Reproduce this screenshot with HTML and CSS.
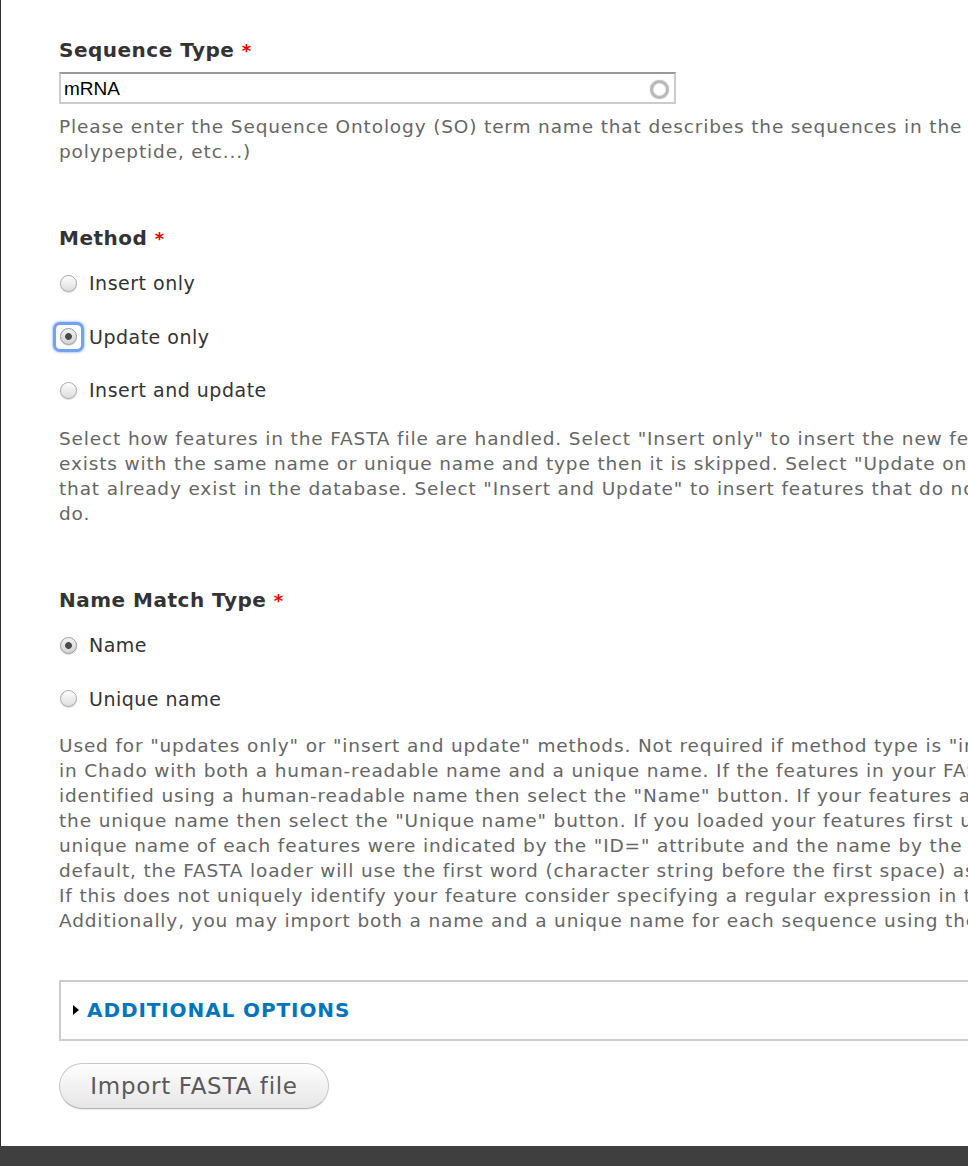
FILE: index.html
```html
<!DOCTYPE html>
<html lang="en">
<head>
    <meta charset="UTF-8">
    <meta name="viewport" content="width=device-width, initial-scale=1.0">
    <title>Import FASTA file</title>
    <link rel="stylesheet" href="styles.css">
</head>
<body>
    <div class="page">
        <form class="import-form">
            <!-- Sequence type (autocomplete) -->
            <div class="form-item form-item-type">
                <label class="form-label" for="seq-type">Sequence Type <span class="required">*</span></label>
                <div class="autocomplete">
                    <input type="text" id="seq-type" class="form-text" value="mRNA">
                    <span class="throbber"></span>
                </div>
                <div class="description">
                    Please enter the Sequence Ontology (SO) term name that describes the sequences in the FASTA file (e.g. gene, mRNA,<br>
                    polypeptide, etc...)
                </div>
            </div>

            <!-- Method -->
            <div class="form-item form-item-method">
                <label class="form-label">Method <span class="required">*</span></label>
                <div class="form-radios">
                    <div class="form-radio-item">
                        <input type="radio" name="method" id="method-insert" class="form-radio">
                        <label for="method-insert">Insert only</label>
                    </div>
                    <div class="form-radio-item">
                        <span class="focus-ring"><input type="radio" name="method" id="method-update" class="form-radio" checked></span>
                        <label for="method-update">Update only</label>
                    </div>
                    <div class="form-radio-item">
                        <input type="radio" name="method" id="method-both" class="form-radio">
                        <label for="method-both">Insert and update</label>
                    </div>
                </div>
                <div class="description">
                    Select how features in the FASTA file are handled. Select "Insert only" to insert the new features. If a feature already<br>
                    exists with the same name or unique name and type then it is skipped. Select "Update only" to only update featues<br>
                    that already exist in the database. Select "Insert and Update" to insert features that do not exist and upate those that already<br>
                    do.
                </div>
            </div>

            <!-- Name match type -->
            <div class="form-item form-item-match">
                <label class="form-label">Name Match Type <span class="required">*</span></label>
                <div class="form-radios">
                    <div class="form-radio-item">
                        <input type="radio" name="match" id="match-name" class="form-radio" checked>
                        <label for="match-name">Name</label>
                    </div>
                    <div class="form-radio-item">
                        <input type="radio" name="match" id="match-uname" class="form-radio">
                        <label for="match-uname">Unique name</label>
                    </div>
                </div>
                <div class="description">
                    Used for "updates only" or "insert and update" methods. Not required if method type is "insert". Feature data is stored<br>
                    in Chado with both a human-readable name and a unique name. If the features in your FASTA file are<br>
                    identified using a human-readable name then select the "Name" button. If your features are identified using<br>
                    the unique name then select the "Unique name" button. If you loaded your features first using the GFF loader then the<br>
                    unique name of each features were indicated by the "ID=" attribute and the name by the "Name=" attribute. By<br>
                    default, the FASTA loader will use the first word (character string before the first space) as the name for your feature.<br>
                    If this does not uniquely identify your feature consider specifying a regular expression in the advanced section below.<br>
                    Additionally, you may import both a name and a unique name for each sequence using the advanced options.
                </div>
            </div>

            <fieldset class="collapsible collapsed">
                <legend><span class="arrow"></span><a href="#" class="fieldset-title">Additional Options</a></legend>
            </fieldset>

            <button type="button" class="form-submit">Import FASTA file</button>
        </form>
    </div>
    <div class="bottom-bar"></div>
</body>
</html>
```

FILE: styles.css
```css
html, body {
    margin: 0;
    padding: 0;
}

body {
    width: 968px;
    height: 1166px;
    overflow: hidden;
    background-color: #fff;
    font-family: "DejaVu Sans", sans-serif;
    color: #333;
}

.page {
    height: 1146px;
    border-left: 1px solid #2f2f2f;
    overflow: hidden;
    box-sizing: border-box;
}

.import-form {
    width: 1500px;
    padding: 38px 0 0 58px;
}

.form-label {
    display: block;
    font-size: 20px;
    line-height: 24px;
    font-weight: bold;
    letter-spacing: 0.5px;
    color: #333;
}

.required {
    color: #e00;
    font-size: 18px;
}

.description {
    font-size: 18.5px;
    line-height: 25px;
    letter-spacing: 0.85px;
    color: #666;
    white-space: nowrap;
}

/* sequence type */
.form-item-type .form-label {
    margin-bottom: 9px;
}

.autocomplete {
    position: relative;
    width: 617px;
}

.form-text {
    display: block;
    box-sizing: border-box;
    width: 617px;
    height: 32px;
    margin: 0;
    padding: 2px 3px 0;
    border: 2px solid #ccc;
    border-top-color: #999;
    font-family: "Liberation Sans", Arial, sans-serif;
    font-size: 19px;
    color: #000;
    outline: none;
}

.throbber {
    position: absolute;
    right: 7px;
    top: 8px;
    width: 13px;
    height: 13px;
    border: 3px solid #b9b9b9;
    border-radius: 50%;
    box-shadow: 0 0 1px #999, inset 0 0 1px #999;
}

.form-item-type .description {
    margin-top: 10px;
}

/* radios */
.form-item-method {
    margin-top: 62px;
}

.form-item-match {
    margin-top: 62px;
}

.form-radios {
    display: flex;
    flex-direction: column;
    gap: 27.5px;
    margin: 19px 0 23px;
}

.form-item-match .form-radios {
    margin: 19px 0 21px;
}

.form-radio-item {
    display: flex;
    align-items: center;
    height: 26px;
}

.form-radio-item label {
    font-size: 19px;
    letter-spacing: 0.5px;
    color: #333;
    margin-left: 12px;
}

.form-radio {
    appearance: none;
    -webkit-appearance: none;
    width: 17px;
    height: 17px;
    margin: 0 0 0 1px;
    border: 1px solid #a8a8a8;
    border-radius: 50%;
    background: linear-gradient(#fdfdfd, #dedede);
    box-shadow: 0 1px 1px rgba(0,0,0,0.15);
    box-sizing: border-box;
}

.form-radio:checked {
    background: radial-gradient(circle, #4a4a4a 0, #4a4a4a 3px, transparent 3.8px), linear-gradient(#f2f2f2, #d4d4d4);
    border-color: #9a9a9a;
}

.focus-ring {
    display: inline-flex;
    align-items: center;
    justify-content: center;
    width: 25px;
    height: 24px;
    margin-left: -3px;
    margin-right: -4px;
    border-radius: 4px;
    box-shadow: 0 0 0 3px #74a2f0, 0 0 2px 4px rgba(116,162,240,0.5);
}

.focus-ring .form-radio {
    margin: 0;
}

/* fieldset */
.collapsible {
    margin: 47px 0 0;
    padding: 0;
    height: 57px;
    border: 2px solid #ccc;
    box-sizing: content-box;
    position: relative;
}

.collapsible legend {
    position: absolute;
    top: 15px;
    left: 12px;
    padding: 0;
    display: flex;
    align-items: center;
}

.arrow {
    width: 0;
    height: 0;
    border-top: 5px solid transparent;
    border-bottom: 5px solid transparent;
    border-left: 6px solid #000;
    margin-right: 8px;
}

.fieldset-title {
    font-size: 20px;
    font-weight: bold;
    letter-spacing: 0.9px;
    text-transform: uppercase;
    color: #0074bd;
    text-decoration: none;
    line-height: 26px;
}

/* submit */
.form-submit {
    display: block;
    margin-top: 22px;
    width: 270px;
    height: 46px;
    padding: 0;
    border: 1px solid #c8c8c8;
    border-bottom-color: #b4b4b4;
    border-radius: 23px;
    background: linear-gradient(#fefefe, #e6e6e6);
    box-shadow: 0 1px 1px rgba(0,0,0,0.08);
    font-family: "DejaVu Sans", sans-serif;
    font-size: 23px;
    letter-spacing: 0.7px;
    color: #5a5a5a;
    cursor: pointer;
}

.bottom-bar {
    height: 20px;
    background-color: #3f3f3f;
}
```
